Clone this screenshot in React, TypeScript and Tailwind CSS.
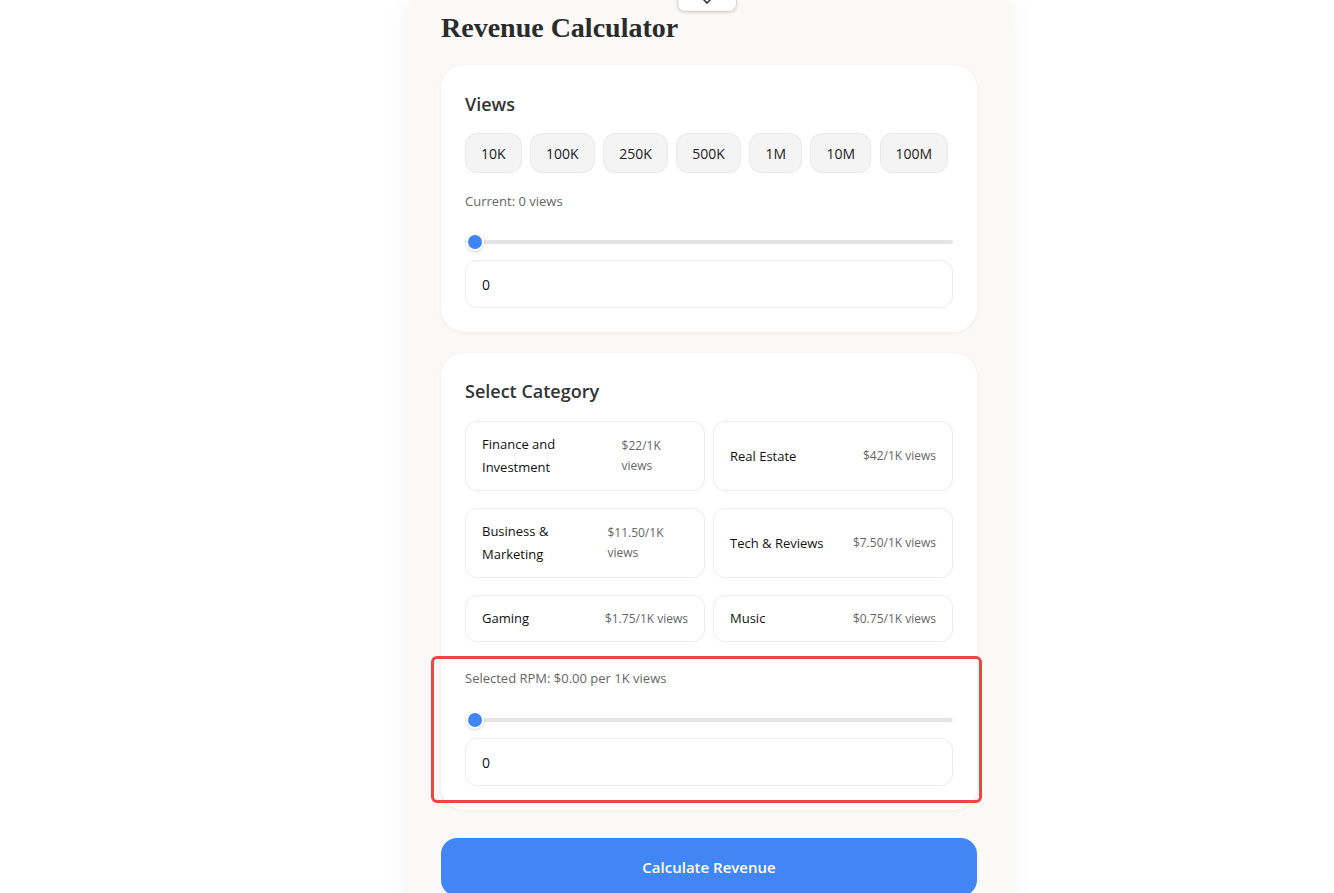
import React from "react";

const presets = ["10K", "100K", "250K", "500K", "1M", "10M", "100M"];

const categories = [
  { name: "Finance and Investment", rpm: "$22/1K views" },
  { name: "Real Estate", rpm: "$42/1K views" },
  { name: "Business & Marketing", rpm: "$11.50/1K views" },
  { name: "Tech & Reviews", rpm: "$7.50/1K views" },
  { name: "Gaming", rpm: "$1.75/1K views" },
  { name: "Music", rpm: "$0.75/1K views" },
];

function Slider({ top }: { top: string }) {
  return (
    <div className={`relative mb-[10px] flex h-4 items-center ${top}`}>
      <div className="h-1 w-full rounded-full bg-[#e4e4e4]" />
      <div className="absolute left-px top-1/2 h-[18px] w-[18px] -translate-y-1/2 rounded-full border-2 border-white bg-[#4285f4] shadow-[0_1px_3px_rgba(0,0,0,0.18)]" />
    </div>
  );
}

function NumberBox() {
  return (
    <div className="flex h-12 items-center rounded-xl border border-[#ececec] bg-white px-4 text-[14px] text-[#111]">
      0
    </div>
  );
}

export default function App() {
  return (
    <div className="min-h-screen bg-white" style={{ fontFamily: '"Open Sans", "Noto Sans", sans-serif' }}>
      <div className="relative ml-[409px] min-h-[960px] w-[600px] bg-[#faf9f7] px-8 shadow-[0_0_28px_rgba(0,0,0,0.06)]">
        {/* collapse tab */}
        <div className="absolute left-[268px] top-0 flex h-[12px] w-[60px] justify-center rounded-b-lg border border-t-0 border-[#d6d6d6] bg-white shadow-[0_1px_3px_rgba(0,0,0,0.12)]">
          <svg width="10" height="4" viewBox="0 0 10 4">
            <path d="M2 0 L5 3 L8 0" fill="none" stroke="#333" strokeWidth="1.6" strokeLinecap="round" />
          </svg>
        </div>

        <h1
          className="pt-[10px] text-[28px] font-bold leading-[36px] text-[#2b2b2b]"
          style={{ fontFamily: '"Liberation Serif", "DejaVu Serif", serif' }}
        >
          Revenue Calculator
        </h1>

        <section className="mt-[19px] rounded-3xl bg-white px-6 pt-[25px] pb-6 shadow-[0_1px_4px_rgba(0,0,0,0.05)]">
          <h2 className="text-[18px] font-semibold leading-7 text-[#333]">Views</h2>
          <div className="mt-[15px] flex gap-[8.5px]">
            {presets.map((p) => (
              <button
                key={p}
                className="h-10 rounded-xl border border-[#e9e9e9] bg-[#f4f4f4] px-[15px] text-[14px] text-[#222]"
              >
                {p}
              </button>
            ))}
          </div>
          <p className="mt-4 text-[13px] leading-6 text-[#666]">Current: 0 views</p>
          <Slider top="mt-[21px]" />
          <NumberBox />
        </section>

        <section className="mt-[21px] rounded-3xl bg-white px-6 pt-6 pb-6 shadow-[0_1px_4px_rgba(0,0,0,0.05)]">
          <h2 className="text-[18px] font-semibold leading-7 text-[#333]">Select Category</h2>
          <div className="mt-4 grid grid-cols-2 gap-x-2 gap-y-[17px]">
            {categories.map((c) => (
              <div
                key={c.name}
                className="flex items-center justify-between gap-2 rounded-xl border border-[#ececec] bg-white px-4 py-[11px]"
              >
                <span className="text-[13px] leading-[23px] text-[#111]">{c.name}</span>
                <span className="text-[12px] leading-5 text-[#666]">{c.rpm}</span>
              </div>
            ))}
          </div>
          <p className="mt-6 text-[13px] leading-6 text-[#666]">Selected RPM: $0.00 per 1K views</p>
          <Slider top="mt-[22px]" />
          <NumberBox />
        </section>

        <button className="mt-7 h-[58px] w-full rounded-2xl bg-[#4285f4] text-[15px] font-semibold text-white">
          Calculate Revenue
        </button>

        {/* highlight overlay */}
        <div className="pointer-events-none absolute left-[22px] top-[656px] h-[147px] w-[551px] rounded-md border-[3px] border-[#ef4444]" />
      </div>
    </div>
  );
}
